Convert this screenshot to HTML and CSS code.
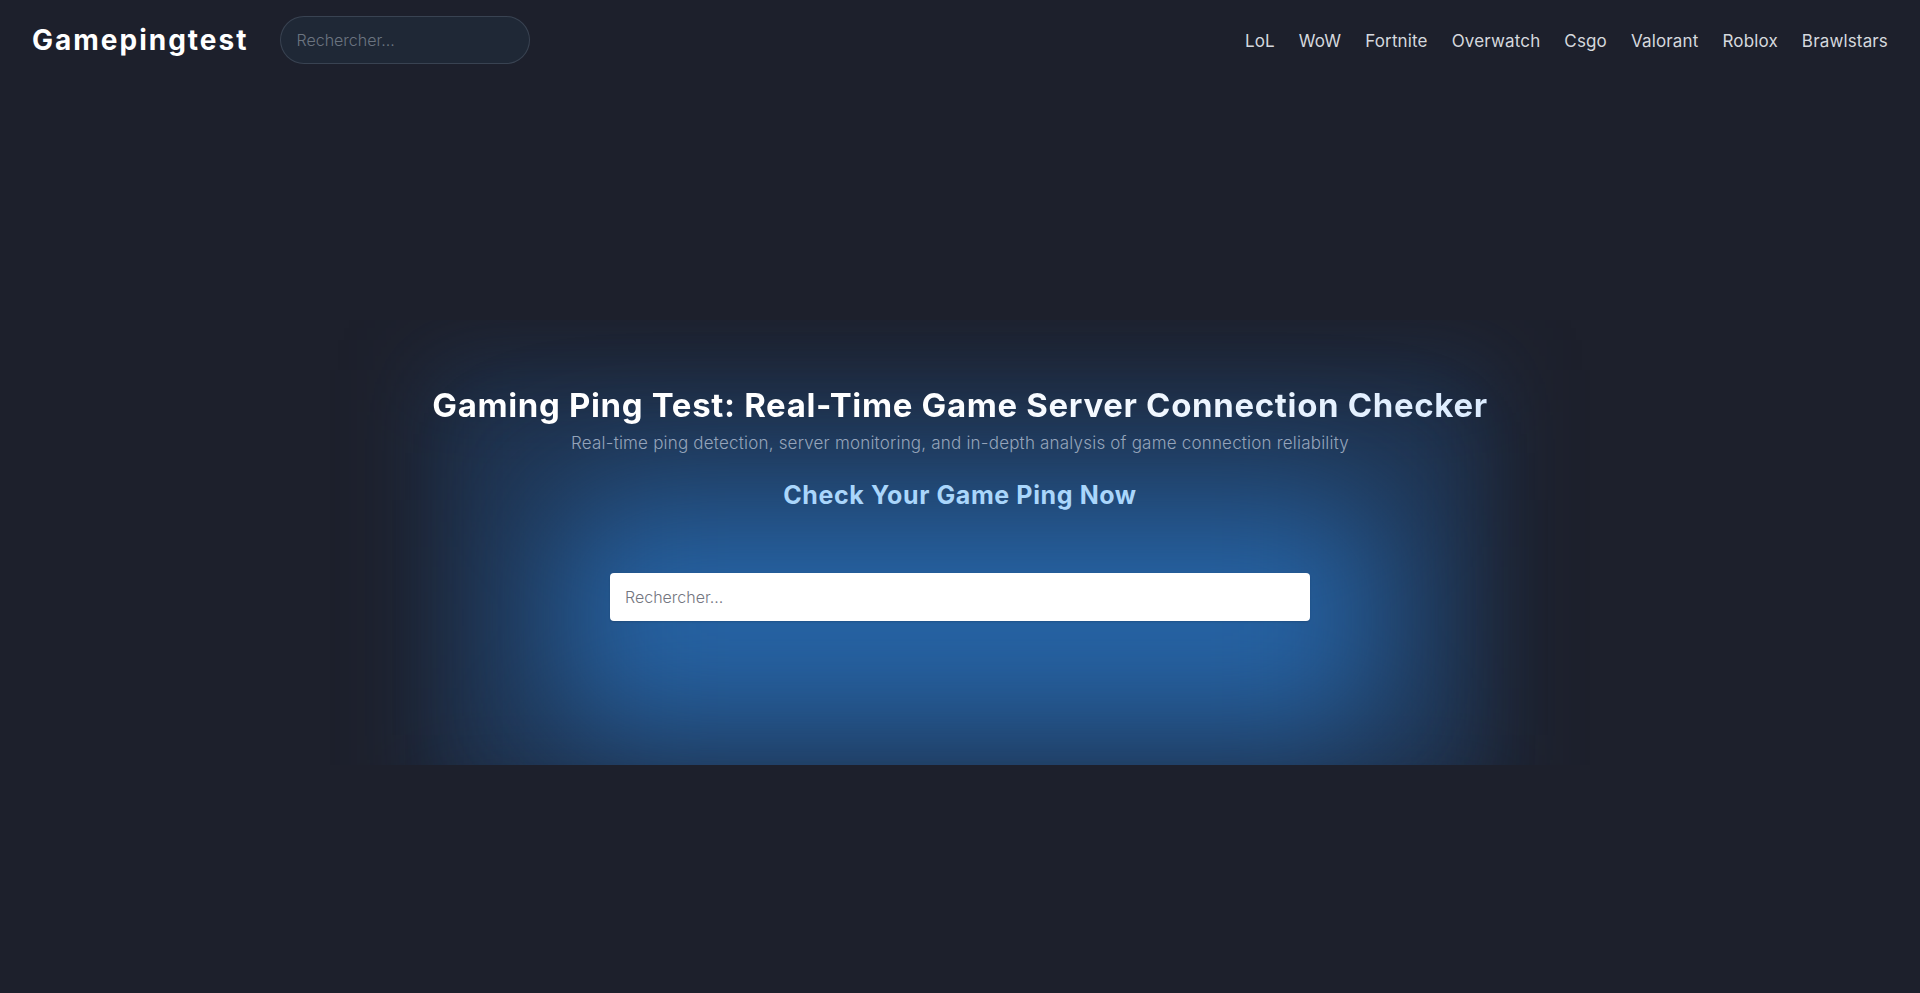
FILE: index.html
```html
<!DOCTYPE html>
<html lang="fr">
<head>
<meta charset="utf-8">
<title>Gamepingtest</title>
<link rel="stylesheet" href="styles.css">
</head>
<body>
<header class="topbar">
  <div class="brand-group">
    <a class="logo" href="#">Gamepingtest</a>
    <input class="top-search" type="text" placeholder="Rechercher...">
  </div>
  <nav class="nav">
    <a href="#">LoL</a>
    <a href="#">WoW</a>
    <a href="#">Fortnite</a>
    <a href="#">Overwatch</a>
    <a href="#">Csgo</a>
    <a href="#">Valorant</a>
    <a href="#">Roblox</a>
    <a href="#">Brawlstars</a>
  </nav>
</header>
<main class="hero">
  <div class="glow"></div>
  <div class="hero-content">
    <h1 class="title">Gaming Ping Test: Real-Time Game Server Connection Checker</h1>
    <p class="subtitle">Real-time ping detection, server monitoring, and in-depth analysis of game connection reliability</p>
    <h2 class="cta">Check Your Game Ping Now</h2>
    <input class="main-search" type="text" placeholder="Rechercher...">
  </div>
</main>
</body>
</html>
```
FILE: styles.css
```css
* { box-sizing: border-box; }
html, body { margin: 0; padding: 0; }
body {
  background: #1d202c;
  font-family: Inter, "Noto Sans", "Liberation Sans", sans-serif;
  color: #e5e7eb;
  min-height: 993px;
  overflow: hidden;
}
.topbar {
  height: 80px;
  display: flex;
  align-items: center;
  justify-content: space-between;
  padding: 0 32px 0 32px;
}
.brand-group {
  display: flex;
  align-items: center;
  gap: 32px;
}
.logo {
  font-size: 28px;
  font-weight: 700;
  color: #ffffff;
  text-decoration: none;
  letter-spacing: 2px;
}
.top-search {
  width: 250px;
  height: 48px;
  border-radius: 24px;
  border: 1px solid rgba(148, 163, 184, 0.22);
  background: #1f2836;
  color: #e5e7eb;
  padding: 0 15px;
  font-family: inherit;
  font-size: 16px;
  outline: none;
}
.top-search::placeholder { color: #6b7480; font-weight: 300; }
.nav {
  display: flex;
  gap: 24px;
  padding-top: 2px;
}
.nav a {
  color: #d5d8de;
  text-decoration: none;
  font-size: 17px;
  font-weight: 400;
  letter-spacing: 0.15px;
}
.hero {
  position: relative;
  display: flex;
  justify-content: center;
  padding-top: 304px;
}
.glow {
  position: absolute;
  left: 330px;
  width: 1260px;
  top: 240px;
  height: 445px;
  overflow: hidden;
  pointer-events: none;
}
.glow::before {
  content: "";
  position: absolute;
  left: 100px;
  right: 100px;
  top: 50px;
  bottom: -40px;
  background: rgba(32, 68, 112, 0.5);
  filter: blur(45px);
}
.glow::after {
  content: "";
  position: absolute;
  left: 230px;
  right: 210px;
  top: 180px;
  bottom: 30px;
  background: rgb(38, 101, 168);
  filter: blur(70px);
}
.hero-content {
  position: relative;
  display: flex;
  flex-direction: column;
  align-items: center;
}
.title {
  margin: 0;
  font-size: 33px;
  font-weight: 700;
  line-height: 42px;
  letter-spacing: 0.65px;
  color: #f4f8ff;
  background: linear-gradient(90deg, #ffffff 0%, #ffffff 45%, #dcecff 100%);
  -webkit-background-clip: text;
  background-clip: text;
  -webkit-text-fill-color: transparent;
}
.subtitle {
  margin: 5px 0 0 0;
  font-size: 17px;
  line-height: 24px;
  font-weight: 300;
  letter-spacing: 0.2px;
  color: #95a4ba;
}
.cta {
  margin: 24px 0 0 0;
  font-size: 25px;
  line-height: 32px;
  font-weight: 700;
  letter-spacing: 0.6px;
  color: #aad6fb;
}
.main-search {
  margin-top: 62px;
  width: 700px;
  height: 48px;
  border: none;
  border-radius: 4px;
  background: #ffffff;
  padding: 0 15px;
  font-family: inherit;
  font-size: 16px;
  color: #111827;
  outline: none;
  box-shadow: 0 1px 2px rgba(0,0,0,0.15);
}
.main-search::placeholder { color: #737680; font-weight: 300; }
```
